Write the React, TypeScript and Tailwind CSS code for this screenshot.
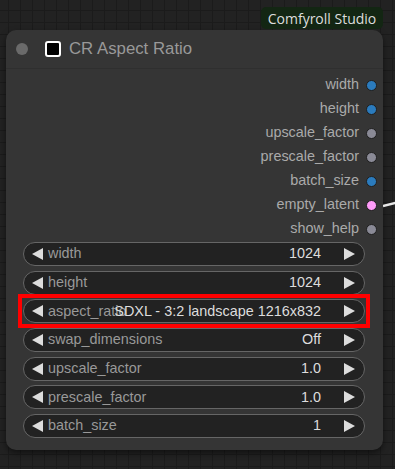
import React from "react";

type Output = { name: string; color: string };

const OUTPUTS: Output[] = [
  { name: "width", color: "bg-[#2b7bbd]" },
  { name: "height", color: "bg-[#2b7bbd]" },
  { name: "upscale_factor", color: "bg-[#8a8a96]" },
  { name: "prescale_factor", color: "bg-[#8a8a96]" },
  { name: "batch_size", color: "bg-[#2b7bbd]" },
  { name: "empty_latent", color: "bg-[#ff9cf9]" },
  { name: "show_help", color: "bg-[#8a8a96]" },
];

type Widget = { label: string; value: string; highlight?: boolean };

const WIDGETS: Widget[] = [
  { label: "width", value: "1024" },
  { label: "height", value: "1024" },
  { label: "aspect_ratio", value: "SDXL - 3:2 landscape 1216x832", highlight: true },
  { label: "swap_dimensions", value: "Off" },
  { label: "upscale_factor", value: "1.0" },
  { label: "prescale_factor", value: "1.0" },
  { label: "batch_size", value: "1" },
];

function Arrow({ dir }: { dir: "left" | "right" }) {
  return (
    <svg width="11" height="12" viewBox="0 0 11 12" className="shrink-0">
      <polygon
        points={dir === "left" ? "11,0 11,12 0,6" : "0,0 0,12 11,6"}
        fill="#dddddd"
      />
    </svg>
  );
}

function WidgetRow({ widget }: { widget: Widget }) {
  return (
    <div className="relative h-[24px]">
      {widget.highlight ? (
        <div className="pointer-events-none absolute -inset-x-[5px] -inset-y-[5px] border-4 border-[#ff0000]" />
      ) : null}
      <div className="relative flex h-full items-center rounded-full border border-[#666] bg-[#222] pl-[8px] pr-[9px]">
        <Arrow dir="left" />
        <span className="ml-[5px] whitespace-nowrap text-[#999]">{widget.label}</span>
        {/* value is painted over the label, as the canvas does */}
        <span className="absolute right-[43px] whitespace-nowrap text-[#ddd]">
          {widget.value}
        </span>
        <span className="ml-auto">
          <Arrow dir="right" />
        </span>
      </div>
    </div>
  );
}

export default function App() {
  return (
    <div
      className="relative h-[469px] w-[395px] overflow-hidden bg-[#222] bg-[linear-gradient(#1b1b1b_1px,transparent_1px),linear-gradient(90deg,#1b1b1b_1px,transparent_1px)] bg-[size:12px_12px] bg-[position:-4px_-2px] pt-[7px] pl-[6px] text-[14.4px]"
      style={{ fontFamily: '"Liberation Sans", Arial, sans-serif' }}
    >
      <div className="flex w-[377px] justify-end">
        <div
          className="flex h-[22px] w-[122px] items-center justify-center rounded-[5px] bg-[#132613] text-[14px] text-[#ddd]"
          style={{ fontFamily: '"Open Sans", "Noto Sans", sans-serif' }}
        >
          Comfyroll Studio
        </div>
      </div>

      <div className="mt-[1px] h-[420px] w-[377px] rounded-[10px] bg-[#353535] shadow-[0_3px_6px_rgba(0,0,0,0.5)]">
        <div className="flex h-[39px] items-center border-b border-[#2f2f2f] pl-[10px]">
          <div className="h-[12px] w-[12px] rounded-full bg-[#6a6a6a]" />
          <div className="ml-[17px] h-[16px] w-[16px] rounded-[3px] border-2 border-white bg-black" />
          <span className="ml-[8px] text-[16.8px] text-[#999]">CR Aspect Ratio</span>
        </div>

        <div className="mt-[4px] flex flex-col">
          {OUTPUTS.map((o) => (
            <div key={o.name} className="relative flex h-[24px] items-center justify-end pr-[6px]">
              <span className="text-[#aaa]">{o.name}</span>
              <span
                className={`ml-[7px] h-[11px] w-[11px] rounded-full border border-[#1f1f1f] ${o.color}`}
              />
              {o.name === "empty_latent" ? (
                <svg
                  width="20"
                  height="14"
                  viewBox="0 0 20 14"
                  className="absolute right-[-20px] top-[3px]"
                >
                  <path d="M0 10 L20 5" stroke="#e8e8e8" strokeWidth="2.5" fill="none" />
                </svg>
              ) : null}
            </div>
          ))}
        </div>

        <div className="mt-[1px] flex flex-col gap-[4.7px] px-[17px] pr-[18px]">
          {WIDGETS.map((w) => (
            <WidgetRow key={w.label} widget={w} />
          ))}
        </div>
      </div>
    </div>
  );
}
